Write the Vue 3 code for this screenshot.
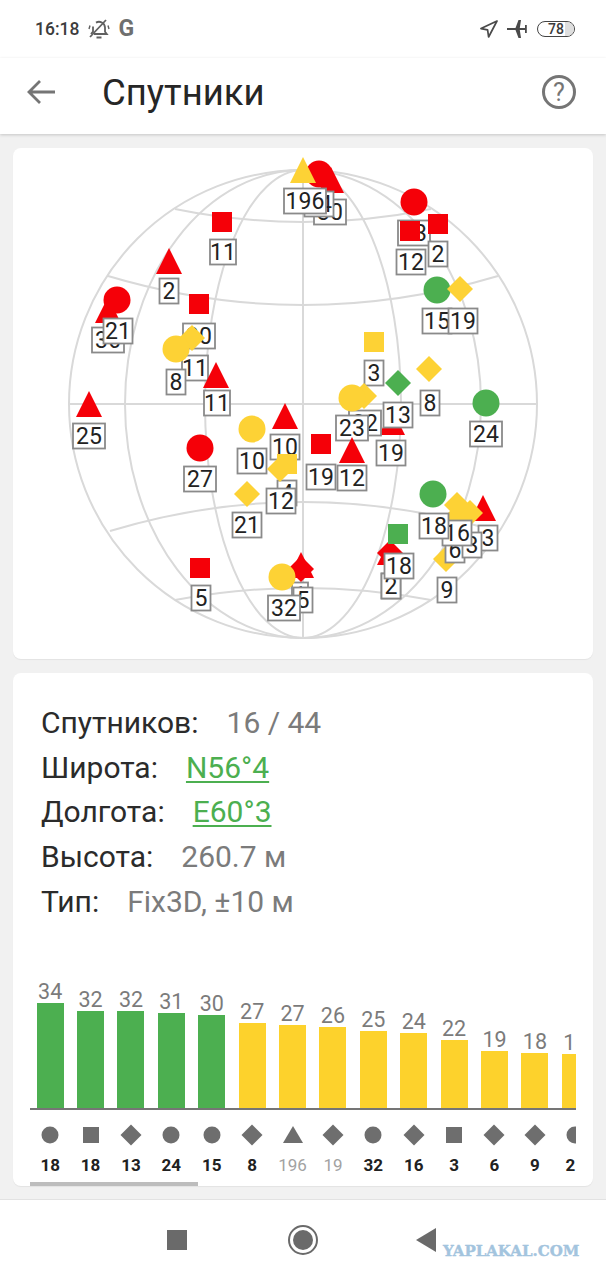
<template>
  <div class="screen">
    <div class="status">
      <div class="status-left">
        <span class="time">16:18</span>
        <svg class="bell" width="22" height="20" viewBox="0 0 22 20" fill="none" stroke="#606060" stroke-width="1.8">
          <path d="M8 3.6A6 6 0 0 1 17 8.5v4.2l1.8 2.3H6" />
          <path d="M5 7.5v5.2L3 15" />
          <path d="M2 18 18 1" />
          <path d="M8.5 18.5h5" stroke-width="2" />
          <path d="M2 6.5 1 10M20 6.5l1 3.5" stroke-width="1.4" />
        </svg>
        <span class="g">G</span>
      </div>
      <div class="status-right">
        <svg width="18" height="18" viewBox="0 0 18 18" fill="none" stroke="#4a4a4a" stroke-width="1.7" stroke-linejoin="round">
          <path d="M17 1 1 8.6l6.6 1.2 1 7.2z" />
        </svg>
        <svg width="21" height="18" viewBox="0 0 21 18" fill="#4a4a4a">
          <path d="M0 8h8.5L11.5 0H14l-1.2 8H18V5h1.8v8H18v-3h-5.2L14 18h-2.5L8.5 10H0z" />
        </svg>
        <div class="battery"><span class="battery-fill"></span><span class="battery-text">78</span></div>
      </div>
    </div>

    <header class="toolbar">
      <svg class="back" width="30" height="26" viewBox="0 0 30 26" fill="none" stroke="#757575" stroke-width="2.8">
        <path d="M29 13H3M14 2 3 13l11 11" />
      </svg>
      <h1 class="title">Спутники</h1>
      <div class="help">?</div>
    </header>

    <main class="content">
      <section class="card sky-card">
        <svg class="sky" width="580" height="511" viewBox="13 148 580 511">
          <g fill="none" stroke="#d9d9d9" stroke-width="2">
            <circle cx="303" cy="404" r="234" />
            <ellipse cx="303" cy="404" rx="178" ry="234" />
            <ellipse cx="303" cy="404" rx="98" ry="234" />
            <path d="M303 170V638M69 404H537" />
            <path d="M175 209Q303 235 431 209" />
            <path d="M108 276Q303 334 498 276" />
            <path d="M110 531Q303 473 496 531" />
            <path d="M175 600Q303 576 431 600" />
          </g>
          <g v-for="(s, i) in sats" :key="i">
            <circle v-if="s.t === 'c'" :cx="s.x" :cy="s.y" r="13.5" :fill="colors[s.c]" />
            <rect v-else-if="s.t === 's'" :x="s.x - 10" :y="s.y - 10" width="20" height="20" :fill="colors[s.c]" />
            <polygon v-else-if="s.t === 't'" :points="trianglePoints(s)" :fill="colors[s.c]" />
            <polygon v-else :points="diamondPoints(s)" :fill="colors[s.c]" />
            <rect
              :x="s.lx - labelWidth(s.n) / 2"
              :y="s.ly - 12.5"
              :width="labelWidth(s.n)"
              height="25"
              fill="#fff"
              stroke="#8a8a8a"
              stroke-width="1.8"
            />
            <text :x="s.lx" :y="s.ly + 8" class="sat-num" text-anchor="middle">{{ s.n }}</text>
          </g>
        </svg>
      </section>

      <section class="card info-card">
        <div class="info">
          <div class="row"><span>Спутников:</span><span class="val">16 / 44</span></div>
          <div class="row"><span>Широта:</span><span class="val link">N56°4</span></div>
          <div class="row"><span>Долгота:</span><span class="val link">E60°3</span></div>
          <div class="row"><span>Высота:</span><span class="val">260.7 м</span></div>
          <div class="row"><span>Тип:</span><span class="val">Fix3D, ±10 м</span></div>
        </div>

        <div class="chart">
          <div class="chart-scroll">
            <div v-for="(b, i) in bars" :key="i" class="col">
              <div class="plot">
                <span class="snr">{{ b.snr }}</span>
                <div class="bar" :class="b.c" :style="{ height: b.h + 'px' }"></div>
              </div>
              <svg class="shape" width="26" height="26" viewBox="-13 -13 26 26" fill="#6e6e6e">
                <circle v-if="b.t === 'c'" r="8.5" />
                <rect v-else-if="b.t === 's'" x="-8" y="-8" width="16" height="16" />
                <polygon v-else-if="b.t === 't'" points="0,-9 10,8 -10,8" />
                <polygon v-else points="0,-10.5 10.5,0 0,10.5 -10.5,0" />
              </svg>
              <span class="sat-id" :class="{ dim: b.dim }">{{ b.n }}</span>
            </div>
          </div>
          <div class="scrollbar"></div>
        </div>
      </section>
    </main>

    <nav class="navbar">
      <div class="nav-square"></div>
      <div class="nav-home"><span></span></div>
      <svg width="20" height="24" viewBox="0 0 20 24" fill="#6a6a6a"><path d="M20 0v24L0 12z" /></svg>
      <span class="watermark">YAPLAKAL.COM</span>
    </nav>
  </div>
</template>

<script setup>
const colors = { r: '#f50008', y: '#fdd235', g: '#4caf50' }

const sats = [
  { t: 't', c: 'r', x: 331, y: 180, lx: 330, ly: 212, n: '30' },
  { t: 'c', c: 'r', x: 319, y: 174, lx: 319, ly: 204, n: '14' },
  { t: 't', c: 'y', x: 303, y: 170, lx: 305, ly: 201, n: '196' },
  { t: 's', c: 'r', x: 222, y: 222, lx: 223, ly: 252, n: '11' },
  { t: 't', c: 'r', x: 169, y: 261, lx: 169, ly: 291, n: '2' },
  { t: 't', c: 'r', x: 108, y: 310, lx: 108, ly: 340, n: '36' },
  { t: 'c', c: 'r', x: 117, y: 300, lx: 118, ly: 331, n: '21' },
  { t: 's', c: 'r', x: 199, y: 304, lx: 199, ly: 336, n: '30' },
  { t: 'd', c: 'y', x: 192, y: 338, lx: 195, ly: 368, n: '11' },
  { t: 'c', c: 'y', x: 176, y: 349, lx: 176, ly: 382, n: '8' },
  { t: 't', c: 'r', x: 216, y: 375, lx: 217, ly: 403, n: '11' },
  { t: 't', c: 'r', x: 89, y: 404, lx: 89, ly: 436, n: '25' },
  { t: 'c', c: 'r', x: 414, y: 202, lx: 414, ly: 233, n: '43' },
  { t: 's', c: 'r', x: 410, y: 231, lx: 411, ly: 262, n: '12' },
  { t: 's', c: 'r', x: 438, y: 224, lx: 438, ly: 254, n: '2' },
  { t: 'c', c: 'g', x: 437, y: 290, lx: 437, ly: 321, n: '15' },
  { t: 'd', c: 'y', x: 460, y: 289, lx: 463, ly: 321, n: '19' },
  { t: 's', c: 'y', x: 374, y: 342, lx: 374, ly: 373, n: '3' },
  { t: 'd', c: 'y', x: 429, y: 369, lx: 430, ly: 403, n: '8' },
  { t: 'c', c: 'g', x: 486, y: 403, lx: 486, ly: 434, n: '24' },
  { t: 't', c: 'r', x: 392, y: 422, lx: 391, ly: 453, n: '19' },
  { t: 'd', c: 'y', x: 364, y: 396, lx: 365, ly: 423, n: '22' },
  { t: 'c', c: 'y', x: 352, y: 398, lx: 352, ly: 428, n: '23' },
  { t: 'd', c: 'g', x: 398, y: 383, lx: 398, ly: 415, n: '13' },
  { t: 's', c: 'r', x: 321, y: 444, lx: 321, ly: 477, n: '19' },
  { t: 't', c: 'r', x: 352, y: 450, lx: 352, ly: 478, n: '12' },
  { t: 'c', c: 'r', x: 200, y: 448, lx: 200, ly: 479, n: '27' },
  { t: 't', c: 'r', x: 285, y: 416, lx: 285, ly: 447, n: '10' },
  { t: 'c', c: 'y', x: 252, y: 429, lx: 252, ly: 461, n: '10' },
  { t: 's', c: 'y', x: 287, y: 464, lx: 287, ly: 493, n: '4' },
  { t: 'd', c: 'y', x: 280, y: 469, lx: 281, ly: 501, n: '12' },
  { t: 'd', c: 'y', x: 247, y: 494, lx: 247, ly: 525, n: '21' },
  { t: 's', c: 'r', x: 200, y: 568, lx: 201, ly: 598, n: '5' },
  { t: 't', c: 'r', x: 301, y: 565, lx: 300, ly: 595, n: '1' },
  { t: 'd', c: 'r', x: 301, y: 569, lx: 303, ly: 600, n: '5' },
  { t: 'c', c: 'y', x: 282, y: 577, lx: 284, ly: 608, n: '32' },
  { t: 't', c: 'r', x: 483, y: 508, lx: 488, ly: 538, n: '3' },
  { t: 'd', c: 'y', x: 446, y: 559, lx: 447, ly: 590, n: '9' },
  { t: 'd', c: 'y', x: 455, y: 519, lx: 455, ly: 550, n: '6' },
  { t: 'd', c: 'y', x: 470, y: 513, lx: 472, ly: 545, n: '3' },
  { t: 'd', c: 'y', x: 457, y: 505, lx: 457, ly: 533, n: '16' },
  { t: 'c', c: 'g', x: 433, y: 494, lx: 434, ly: 526, n: '18' },
  { t: 't', c: 'r', x: 390, y: 552, lx: 391, ly: 586, n: '2' },
  { t: 'd', c: 'r', x: 390, y: 553, lx: 391, ly: 586, n: '2' },
  { t: 's', c: 'g', x: 398, y: 534, lx: 399, ly: 566, n: '18' }
]

const bars = [
  { snr: 34, h: 105, c: 'green', t: 'c', n: 18 },
  { snr: 32, h: 97, c: 'green', t: 's', n: 18 },
  { snr: 32, h: 97, c: 'green', t: 'd', n: 13 },
  { snr: 31, h: 95, c: 'green', t: 'c', n: 24 },
  { snr: 30, h: 93, c: 'green', t: 'c', n: 15 },
  { snr: 27, h: 85, c: 'yellow', t: 'd', n: 8 },
  { snr: 27, h: 83, c: 'yellow', t: 't', n: 196, dim: true },
  { snr: 26, h: 81, c: 'yellow', t: 'd', n: 19, dim: true },
  { snr: 25, h: 77, c: 'yellow', t: 'c', n: 32 },
  { snr: 24, h: 75, c: 'yellow', t: 'd', n: 16 },
  { snr: 22, h: 68, c: 'yellow', t: 's', n: 3 },
  { snr: 19, h: 57, c: 'yellow', t: 'd', n: 6 },
  { snr: 18, h: 55, c: 'yellow', t: 'd', n: 9 },
  { snr: 18, h: 54, c: 'yellow', t: 'c', n: 21 }
]

function trianglePoints(s) {
  return `${s.x},${s.y - 13} ${s.x + 13},${s.y + 13} ${s.x - 13},${s.y + 13}`
}

function diamondPoints(s) {
  return `${s.x},${s.y - 13} ${s.x + 13},${s.y} ${s.x},${s.y + 13} ${s.x - 13},${s.y}`
}

// the app sizes its boxes from the glyphs, so a "1" makes the box narrower
function labelWidth(n) {
  return [...n].reduce((w, d) => w + (d === '1' ? 10 : 13), 6)
}
</script>

<style>
html,
body {
  background: #f1f1f1;
}
</style>

<style scoped>
.screen {
  width: 606px;
  height: 1280px;
  display: flex;
  flex-direction: column;
  overflow: hidden;
  background: #f1f1f1;
  font-family: Roboto, sans-serif;
}

.status {
  height: 58px;
  flex: none;
  display: flex;
  justify-content: space-between;
  align-items: center;
  padding: 0 31px 0 35px;
  background: #fff;
}

.status-left,
.status-right {
  display: flex;
  align-items: center;
}

.time {
  font-size: 17.5px;
  font-weight: 500;
  color: #3c3c3c;
}

.bell {
  margin-left: 9px;
}

.g {
  margin-left: 8px;
  font-size: 23px;
  line-height: 24px;
  font-weight: 700;
  color: #6f6f6f;
}

.status-right {
  gap: 9px;
}

.battery {
  position: relative;
  width: 38px;
  height: 16px;
  box-sizing: border-box;
  border: 1.5px solid #444;
  border-radius: 8px;
  overflow: hidden;
  display: flex;
  align-items: center;
  justify-content: center;
}

.battery-fill {
  position: absolute;
  right: 0;
  top: 0;
  bottom: 0;
  width: 9px;
  background: #dedede;
}

.battery-text {
  position: relative;
  font-size: 14px;
  font-weight: 500;
  color: #3c3c3c;
}

.toolbar {
  height: 76px;
  flex: none;
  display: flex;
  align-items: center;
  padding: 0 30px 8px 26px;
  box-sizing: border-box;
  background: #fff;
  box-shadow: 0 1px 3px rgba(0, 0, 0, 0.18);
  position: relative;
}

.title {
  margin: 0 0 0 46px;
  flex: 1;
  font-size: 36.5px;
  font-weight: 400;
  color: #262626;
}

.help {
  width: 34px;
  height: 34px;
  box-sizing: border-box;
  border: 3px solid #757575;
  border-radius: 50%;
  display: flex;
  align-items: center;
  justify-content: center;
  font-size: 25px;
  color: #757575;
}

.content {
  flex: 1;
  display: flex;
  flex-direction: column;
  gap: 14px;
  padding: 14px 13px 0;
}

.card {
  background: #fff;
  border-radius: 8px;
  box-shadow: 0 1px 1px rgba(0, 0, 0, 0.06);
}

.sky-card {
  height: 511px;
}

.sky {
  display: block;
}

.sat-num {
  font-family: Roboto, sans-serif;
  font-size: 23px;
  fill: #222;
}

.info-card {
  height: 513px;
  box-sizing: border-box;
  padding: 28px 0 0 17px;
}

.info {
  height: 267px;
  padding-left: 11px;
}

.row {
  display: flex;
  gap: 28px;
  height: 44.7px;
  line-height: 44.7px;
  font-size: 30px;
  color: #2b2b2b;
}

.val {
  color: #7b7b7b;
}

.link {
  color: #4caf50;
  text-decoration: underline;
  text-decoration-thickness: 2px;
  text-underline-offset: 3px;
}

.chart {
  width: 546px;
}

.chart-scroll {
  display: flex;
  overflow: hidden;
}

.col {
  flex: 0 0 40.4px;
  display: flex;
  flex-direction: column;
  align-items: center;
}

.plot {
  align-self: stretch;
  height: 140px;
  display: flex;
  flex-direction: column;
  align-items: center;
  justify-content: flex-end;
  border-bottom: 2px solid #757575;
}

.snr {
  font-size: 21.5px;
  line-height: 22px;
  color: #7b7b7b;
}

.bar {
  width: 27px;
}

.bar.green {
  background: #4caf50;
}

.bar.yellow {
  background: #fdd22c;
}

.shape {
  margin-top: 12px;
}

.sat-id {
  margin-top: 7px;
  font-size: 17px;
  line-height: 20px;
  font-weight: 700;
  color: #212121;
}

.sat-id.dim {
  font-weight: 400;
  color: #a2a2a2;
}

.scrollbar {
  width: 168px;
  height: 4px;
  margin-top: 7px;
  background: #bdbdbd;
}

.navbar {
  height: 81px;
  flex: none;
  position: relative;
  display: flex;
  align-items: center;
  padding-left: 167px;
  box-sizing: border-box;
  background: #fff;
  border-top: 1px solid #e2e2e2;
}

.nav-square {
  width: 20px;
  height: 20px;
  background: #6a6a6a;
}

.nav-home {
  width: 30px;
  height: 30px;
  margin-left: 101px;
  box-sizing: border-box;
  border: 2px solid #6a6a6a;
  border-radius: 50%;
  display: flex;
  align-items: center;
  justify-content: center;
}

.nav-home span {
  width: 20px;
  height: 20px;
  border-radius: 50%;
  background: #6a6a6a;
}

.navbar svg {
  margin-left: 98px;
}

.watermark {
  position: absolute;
  left: 443px;
  top: 43px;
  font-family: 'DejaVu Serif', serif;
  font-size: 15px;
  line-height: 17px;
  font-weight: 700;
  color: #a3c4de;
  -webkit-text-stroke: 0.4px #a3c4de;
}
</style>
